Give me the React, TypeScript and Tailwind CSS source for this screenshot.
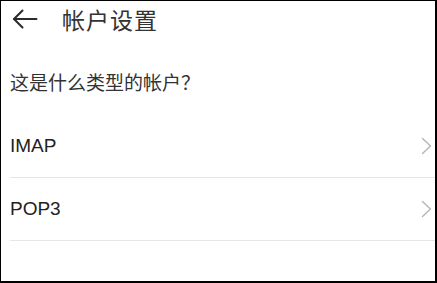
const ACCOUNT_TYPES = ['IMAP', 'POP3'];

function BackArrow() {
  return (
    <svg width="26" height="20" viewBox="0 0 26 20" fill="none" stroke="#2b2b2b" strokeWidth="2" strokeLinecap="round" strokeLinejoin="round">
      <path d="M24.5 10H2" />
      <path d="M10.5 1.5L2 10l8.5 8.5" />
    </svg>
  );
}

function Chevron() {
  return (
    <svg width="11" height="18" viewBox="0 0 11 18" fill="none" stroke="#b5b5b5" strokeWidth="1.4" strokeLinecap="round" strokeLinejoin="round">
      <path d="M1.5 1.5L9.5 9l-8 7.5" />
    </svg>
  );
}

export default function App() {
  return (
    <div
      className="w-[437px] h-[283px] bg-white border-t border-l border-r-2 border-b-2 border-black overflow-hidden"
      style={{ fontFamily: '"Liberation Sans", "Noto Sans CJK SC", sans-serif' }}
    >
      {/* Header */}
      <div className="h-[36px] flex items-center pl-[11px]">
        <BackArrow />
        <h1
          className="ml-[24px] text-[23px] leading-none tracking-[1px] text-[#333]"
          style={{ fontFamily: '"Noto Sans CJK SC", sans-serif' }}
        >
          帐户设置
        </h1>
      </div>

      {/* Question */}
      <p
        className="mt-[33px] pl-[9px] h-[24px] leading-[24px] text-[19px] text-[#333]"
        style={{ fontFamily: '"Noto Sans CJK SC", sans-serif' }}
      >
        这是什么类型的帐户？
      </p>

      {/* Account types */}
      <ul className="mt-[21px] pl-[9px]">
        {ACCOUNT_TYPES.map((type) => (
          <li
            key={type}
            className="h-[63px] flex items-center justify-between border-b border-[#e6e6e6] pr-[3px]"
          >
            <span className="text-[19px] text-[#222]">{type}</span>
            <Chevron />
          </li>
        ))}
      </ul>
    </div>
  );
}
